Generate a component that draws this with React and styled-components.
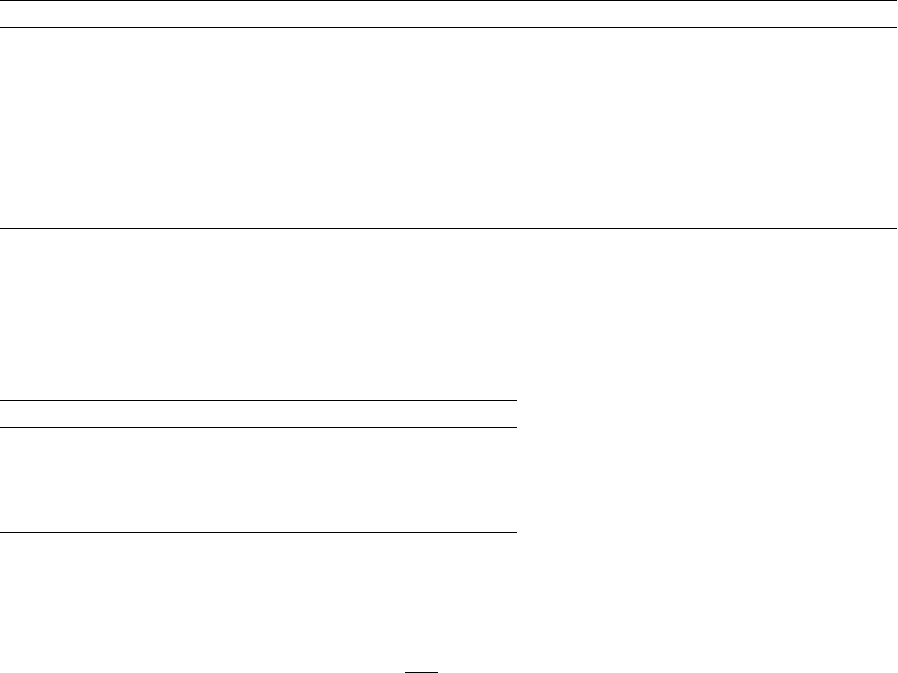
import React from "react";
import styled, { createGlobalStyle } from "styled-components";

const Global = createGlobalStyle`
  html, body { margin: 0; padding: 0; background: #fff; }
  body { font-family: "Liberation Serif", serif; color: #000; }
`;

const Page = styled.div`
  width: 898px;
  display: flex;
  flex-direction: column;
`;

const Table = styled.div`
  width: ${(p) => p.$width};
  display: flex;
  flex-direction: column;
  border-top: 1px solid #000;
  border-bottom: 1px solid #000;
`;

const HeaderRow = styled.div`
  height: 26px;
  border-bottom: 1px solid #000;
`;

const Body = styled.div`
  height: ${(p) => p.$height}px;
`;

const Spacer = styled.div`
  height: ${(p) => p.$height}px;
`;

const ShortRule = styled.div`
  margin-left: 405px;
  width: 33px;
  height: 1px;
  background: #000;
`;

export default function App() {
  return (
    <>
      <Global />
      <Page>
        <Table $width="897px">
          <HeaderRow />
          <Body $height={200} />
        </Table>
        <Spacer $height={171} />
        <Table $width="517px">
          <HeaderRow />
          <Body $height={104} />
        </Table>
        <Spacer $height={139} />
        <ShortRule />
      </Page>
    </>
  );
}
